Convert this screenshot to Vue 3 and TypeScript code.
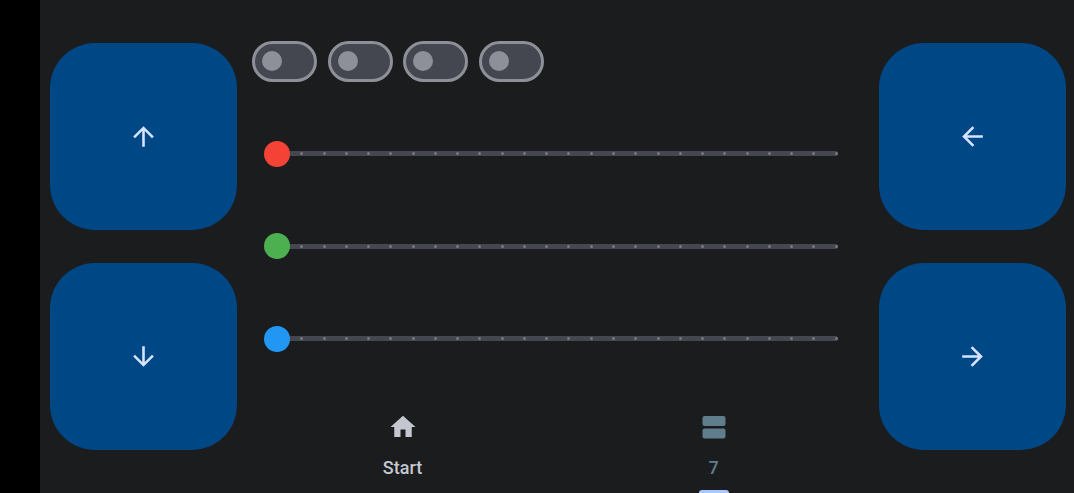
<script setup lang="ts">
import { ref } from 'vue'

interface Slider {
  label: string
  tone: string
  value: number
}

const TICKS = 26

const switches = ref<boolean[]>([false, false, false, false])
const sliders = ref<Slider[]>([
  { label: 'Red', tone: 'red', value: 0 },
  { label: 'Green', tone: 'green', value: 0 },
  { label: 'Blue', tone: 'blue', value: 0 },
])

const leftPad = [
  { label: 'Up', turn: 'up' },
  { label: 'Down', turn: 'down' },
]
const rightPad = [
  { label: 'Left', turn: 'left' },
  { label: 'Right', turn: 'right' },
]
const arrow = 'M4 12l1.41 1.41L11 7.83V20h2V7.83l5.58 5.59L20 12l-8-8-8 8z'
</script>

<template>
  <main class="screen">
    <div class="pad">
      <button v-for="b in leftPad" :key="b.turn" type="button" class="key" :aria-label="b.label">
        <svg class="arrow" :class="b.turn" viewBox="0 0 24 24" aria-hidden="true"><path :d="arrow" /></svg>
      </button>
    </div>

    <section class="center">
      <div class="controls">
        <div class="switches">
          <input
            v-for="(_, i) in switches"
            :key="i"
            v-model="switches[i]"
            type="checkbox"
            role="switch"
            class="switch"
            :aria-label="`Switch ${i + 1}`"
          />
        </div>
        <div v-for="s in sliders" :key="s.tone" class="slider">
          <div class="rail" aria-hidden="true">
            <span v-for="n in TICKS" :key="n" class="tick"></span>
          </div>
          <input
            v-model.number="s.value"
            type="range"
            min="0"
            :max="TICKS - 1"
            class="range"
            :class="s.tone"
            :aria-label="s.label"
          />
        </div>
      </div>

      <nav class="tabs">
        <a href="#start" class="tab">
          <svg class="icon" viewBox="0 0 24 24" aria-hidden="true">
            <path d="M10 20v-6h4v6h5v-8h3L12 3 2 12h3v8z" />
          </svg>
          <span>Start</span>
        </a>
        <a href="#page-7" class="tab active" aria-current="page">
          <svg class="icon" viewBox="0 0 30 30" aria-hidden="true">
            <rect x="3.5" y="4" width="23" height="10" rx="2" />
            <rect x="3.5" y="16.5" width="23" height="10" rx="2" />
          </svg>
          <span>7</span>
        </a>
      </nav>
    </section>

    <div class="pad">
      <button v-for="b in rightPad" :key="b.turn" type="button" class="key" :aria-label="b.label">
        <svg class="arrow" :class="b.turn" viewBox="0 0 24 24" aria-hidden="true"><path :d="arrow" /></svg>
      </button>
    </div>
  </main>
</template>

<style>
body {
  margin: 0;
  background: #1a1c1e;
}
</style>

<style scoped>
.screen {
  box-sizing: border-box;
  display: flex;
  min-height: 100vh;
  padding: 0 8px 0 10px;
  border-left: 40px solid #000;
  background: #1a1c1e;
  font-family: Roboto, "Liberation Sans", sans-serif;
}

.pad {
  flex: none;
  display: flex;
  flex-direction: column;
  justify-content: center;
  gap: 33px;
}

.key {
  display: grid;
  place-items: center;
  width: 187px;
  height: 187px;
  padding: 0;
  border: 0;
  border-radius: 45px;
  background: #004785;
  cursor: pointer;
}

.arrow {
  width: 31px;
  height: 31px;
  fill: #d6e3ff;
}

.down {
  transform: rotate(180deg);
}

.left {
  transform: rotate(-90deg);
}

.right {
  transform: rotate(90deg);
}

.center {
  flex: 1;
  min-width: 0;
  margin: 0 10px;
  display: flex;
  flex-direction: column;
}

.controls {
  flex: 1;
  display: grid;
  grid-template-rows: repeat(4, 1fr);
  align-items: center;
  padding-top: 15px;
}

.switches {
  display: flex;
  justify-content: space-between;
  width: 292px;
  margin-left: 5px;
}

.switch {
  appearance: none;
  box-sizing: border-box;
  display: flex;
  align-items: center;
  width: 65px;
  height: 41px;
  margin: 0;
  padding: 0 7px;
  border: 3px solid #8e9099;
  border-radius: 21px;
  background: #44474f;
  cursor: pointer;
}

.switch::before {
  content: "";
  width: 20px;
  height: 20px;
  border-radius: 50%;
  background: #8e9099;
}

.switch:checked {
  justify-content: flex-end;
}

.slider {
  display: grid;
  align-items: center;
  margin: 0 31px 0 17px;
}

.rail,
.range {
  grid-area: 1 / 1;
}

.rail {
  display: flex;
  justify-content: space-between;
  align-items: center;
  height: 5px;
  margin-left: 14px;
  border-radius: 3px;
  background: #44474f;
}

.tick {
  width: 3px;
  height: 3px;
  border-radius: 50%;
  background: #77797f;
}

.range {
  appearance: none;
  z-index: 1;
  width: 100%;
  height: 26px;
  margin: 0;
  background: transparent;
  cursor: pointer;
}

.range::-webkit-slider-thumb {
  appearance: none;
  width: 26px;
  height: 26px;
  border: 0;
  border-radius: 50%;
  background: currentColor;
}

.red {
  color: #f44336;
}

.green {
  color: #4caf50;
}

.blue {
  color: #2196f3;
}

.tabs {
  display: flex;
  height: 108px;
}

.tab {
  flex: 1;
  box-sizing: border-box;
  display: flex;
  flex-direction: column;
  align-items: center;
  padding-top: 27px;
  color: #c4c6d0;
  font-size: 18px;
  font-weight: 500;
  line-height: 20px;
  text-decoration: none;
}

.tab.active {
  color: #607d8b;
}

.tab.active::after {
  content: "";
  width: 30px;
  height: 3px;
  margin-top: auto;
  border-radius: 3px 3px 0 0;
  background: #aac7ff;
}

.icon {
  flex: none;
  width: 30px;
  height: 30px;
  margin-bottom: 16px;
  fill: currentColor;
}
</style>
